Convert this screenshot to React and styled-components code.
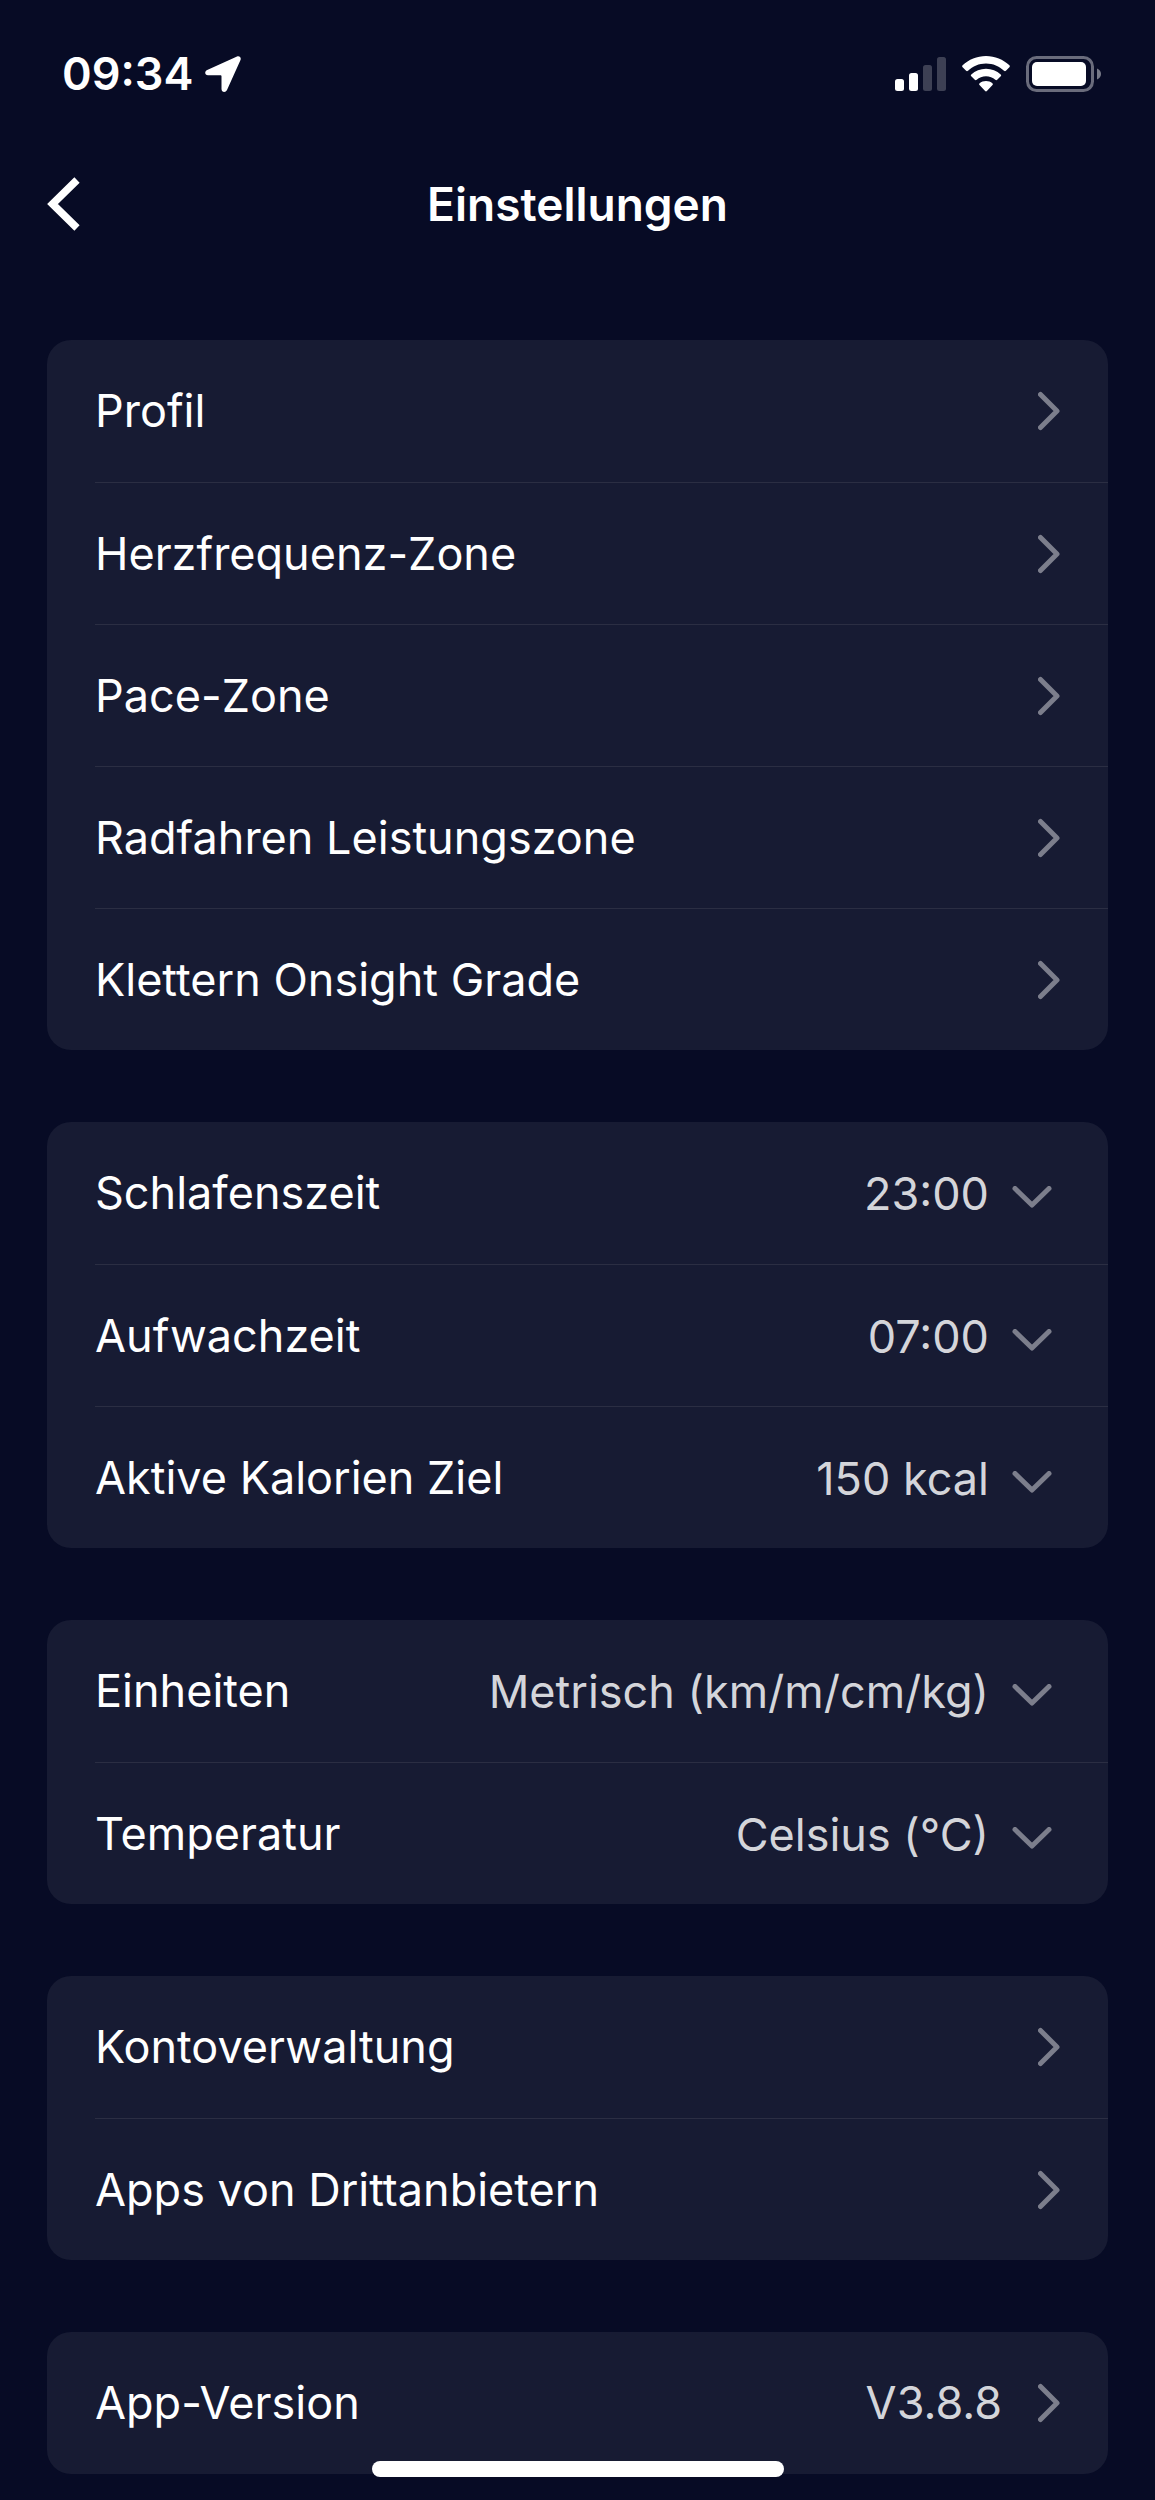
import React from "react";
import styled, { createGlobalStyle } from "styled-components";

const linkGroups = {
  training: [
    { id: "profil", title: "Profil" },
    { id: "herzfrequenz", title: "Herzfrequenz-Zone" },
    { id: "pace", title: "Pace-Zone" },
    { id: "radfahren", title: "Radfahren Leistungszone" },
    { id: "klettern", title: "Klettern Onsight Grade" },
  ],
  account: [
    { id: "konto", title: "Kontoverwaltung" },
    { id: "apps", title: "Apps von Drittanbietern" },
  ],
  about: [{ id: "version", title: "App-Version", value: "V3.8.8" }],
};

const selectGroups = {
  goals: [
    { id: "schlafenszeit", title: "Schlafenszeit", value: "23:00" },
    { id: "aufwachzeit", title: "Aufwachzeit", value: "07:00" },
    { id: "kalorien", title: "Aktive Kalorien Ziel", value: "150 kcal" },
  ],
  units: [
    { id: "einheiten", title: "Einheiten", value: "Metrisch (km/m/cm/kg)" },
    { id: "temperatur", title: "Temperatur", value: "Celsius (°C)" },
  ],
};

const LocationIcon = () => (
  <svg width="36" height="36" viewBox="0 0 36 36" fill="#fff" aria-hidden="true">
    <path d="M32 .4 2.2 14.1C-.9 15.6-.2 19.3 3 19.3h12.6c.6 0 .9.3.9.9V33c0 3.400 4.100 4 5.500 1.100L35.400 4.300C36.600 1.700 34.500-.6 32 .4Z" />
  </svg>
);

const SignalIcon = () => (
  <svg width="51" height="36" viewBox="0 0 51 36" fill="#fff" aria-hidden="true">
    <rect x="0" y="23" width="9" height="12" rx="2.500" />
    <rect x="14" y="17" width="9" height="18" rx="2.500" />
    <rect x="28" y="9" width="9" height="26" rx="2.500" opacity="0.220" />
    <rect x="42" y="1" width="9" height="34" rx="2.500" opacity="0.220" />
  </svg>
);

const WifiIcon = () => (
  <svg width="48" height="36" viewBox="0 0 48 36" fill="#fff" aria-hidden="true">
    <path d="M24 0C15 0 6.700 3.500.6 9.300c-.6.500-.6 1.300 0 1.900l3.500 3.600c.5.500 1.300.5 1.900 0C10.700 10.300 17 7.500 24 7.500s13.300 2.800 18 7.300c.6.500 1.400.5 1.900 0l3.500-3.600c.6-.6.600-1.400 0-1.900C41.300 3.500 33 0 24 0Z" />
    <path d="M24 12.700c-5.600 0-10.800 2.100-14.700 5.700-.6.500-.6 1.300 0 1.900l3.500 3.500c.5.500 1.300.5 1.900 0 2.500-2.200 5.700-3.600 9.300-3.600s6.800 1.400 9.300 3.600c.6.500 1.400.5 1.900 0l3.500-3.500c.6-.6.600-1.400 0-1.900-3.900-3.600-9.100-5.700-14.700-5.700Z" />
    <path d="M24 25c-2.500 0-4.700.8-6.400 2.200-.6.500-.6 1.300-.1 1.800l5.600 6c.5.500 1.300.5 1.800 0l5.600-6c.5-.5.500-1.300-.1-1.800C28.700 25.800 26.500 25 24 25Z" />
  </svg>
);

const BatteryIcon = () => (
  <svg width="76" height="36" viewBox="0 0 76 36" aria-hidden="true">
    <rect x="1.500" y="1.500" width="65" height="33" rx="9" fill="none" stroke="#fff" strokeWidth="3" opacity="0.400" />
    <rect x="6" y="6" width="54" height="24" rx="5" fill="#fff" />
    <path d="M71 12.500c2.600 1 4 3 4 5.500s-1.400 4.500-4 5.500Z" fill="#fff" opacity="0.450" />
  </svg>
);

const BackIcon = () => (
  <svg width="33" height="54" viewBox="0 0 33 54" fill="none" stroke="#fff" strokeWidth="7.500" aria-hidden="true">
    <path d="M30 3 5.500 27 30 51" />
  </svg>
);

const ChevronRight = () => (
  <svg width="22" height="40" viewBox="0 0 22 40" fill="none" stroke="#7c7e8c" strokeWidth="5" strokeLinecap="round" strokeLinejoin="round" aria-hidden="true">
    <path d="m2.500 3.500 16.500 16.500-16.500 16.500" />
  </svg>
);

const ChevronDown = () => (
  <svg width="40" height="22" viewBox="0 0 40 22" fill="none" stroke="#7c7e8c" strokeWidth="5" strokeLinecap="round" strokeLinejoin="round" aria-hidden="true">
    <path d="M3 2.500 20 19 37 2.500" />
  </svg>
);

const LinkGroup = ({ items }) => (
  <Group>
    {items.map((item) => (
      <Item key={item.id}>
        <LinkRow href={`#${item.id}`}>
          <RowTitle>{item.title}</RowTitle>
          {item.value && <RowValue>{item.value}</RowValue>}
          <ChevronRight />
        </LinkRow>
      </Item>
    ))}
  </Group>
);

const SelectGroup = ({ items }) => (
  <Group>
    {items.map((item) => (
      <Item key={item.id}>
        <SelectRow>
          <RowTitle as="label" htmlFor={item.id}>
            {item.title}
          </RowTitle>
          <RowSelect id={item.id} defaultValue={item.value}>
            <option>{item.value}</option>
          </RowSelect>
          <SelectArrow>
            <ChevronDown />
          </SelectArrow>
        </SelectRow>
      </Item>
    ))}
  </Group>
);

const App = () => {
  return (
    <Screen>
      <GlobalStyle />
      <StatusBar>
        <StatusTime>
          09:34
          <LocationIcon />
        </StatusTime>
        <StatusIcons>
          <SignalIcon />
          <WifiIcon />
          <BatteryIcon />
        </StatusIcons>
      </StatusBar>
      <Header>
        <BackButton type="button" aria-label="Zurück">
          <BackIcon />
        </BackButton>
        <HeaderTitle>Einstellungen</HeaderTitle>
      </Header>
      <Groups>
        <LinkGroup items={linkGroups.training} />
        <SelectGroup items={selectGroups.goals} />
        <SelectGroup items={selectGroups.units} />
        <LinkGroup items={linkGroups.account} />
        <LinkGroup items={linkGroups.about} />
      </Groups>
      <HomeIndicator />
    </Screen>
  );
};

export default App;

const GlobalStyle = createGlobalStyle`
  * {
    box-sizing: border-box;
  }
  body {
    margin: 0;
    background: #070b25;
    font-family: Inter, "Liberation Sans", sans-serif;
  }
  svg {
    display: block;
    flex: none;
  }
`;

const Screen = styled.div`
  min-height: 100vh;
  background: #070b25;
  color: #fff;
`;

const StatusBar = styled.div`
  display: flex;
  justify-content: space-between;
  align-items: center;
  height: 148px;
  padding: 0 53px 0 62px;
`;

const StatusTime = styled.div`
  display: flex;
  align-items: center;
  gap: 12px;
  font-size: 45px;
  font-weight: 600;
  line-height: 56px;
`;

const StatusIcons = styled.div`
  display: flex;
  align-items: center;
  gap: 16px;
`;

const Header = styled.header`
  display: grid;
  grid-template-columns: 96px 1fr 96px;
  align-items: center;
  height: 112px;
`;

const BackButton = styled.button`
  display: flex;
  padding: 0 0 0 47px;
  border: 0;
  background: none;
  cursor: pointer;
`;

const HeaderTitle = styled.h1`
  margin: 0;
  font-size: 46px;
  font-weight: 600;
  line-height: 56px;
  text-align: center;
`;

const Groups = styled.main`
  display: flex;
  flex-direction: column;
  gap: 72px;
  padding: 80px 47px 24px;
`;

const Group = styled.ul`
  margin: 0;
  padding: 0 0 0 48px;
  list-style: none;
  background: #171b33;
  border-radius: 24px;
`;

const Item = styled.li`
  height: 142px;

  & + & {
    border-top: 1px solid #2b2e43;
  }
`;

const LinkRow = styled.a`
  display: flex;
  align-items: center;
  gap: 36px;
  height: 100%;
  padding-right: 48px;
  color: inherit;
  text-decoration: none;
`;

const SelectRow = styled.div`
  position: relative;
  display: flex;
  align-items: center;
  height: 100%;
`;

const RowTitle = styled.span`
  flex: 1;
  font-size: 45px;
  line-height: 56px;
  white-space: nowrap;
`;

const RowValue = styled.span`
  color: #d4d5da;
  font-size: 45px;
  line-height: 56px;
`;

const RowSelect = styled.select`
  appearance: none;
  height: 100%;
  margin: 0;
  padding: 2px 119px 0 0;
  border: 0;
  background: none;
  color: #d4d5da;
  font-family: inherit;
  font-size: 45px;
  line-height: 56px;
  text-align-last: right;
  cursor: pointer;
`;

/* sits over the select so the whole right side stays clickable */
const SelectArrow = styled.span`
  position: absolute;
  top: 0;
  right: 56px;
  bottom: 0;
  display: flex;
  align-items: center;
  padding-top: 8px;
  pointer-events: none;
`;

const HomeIndicator = styled.div`
  position: fixed;
  left: 50%;
  bottom: 23px;
  width: 412px;
  height: 16px;
  border-radius: 8px;
  background: #fff;
  transform: translateX(-50%);
`;
